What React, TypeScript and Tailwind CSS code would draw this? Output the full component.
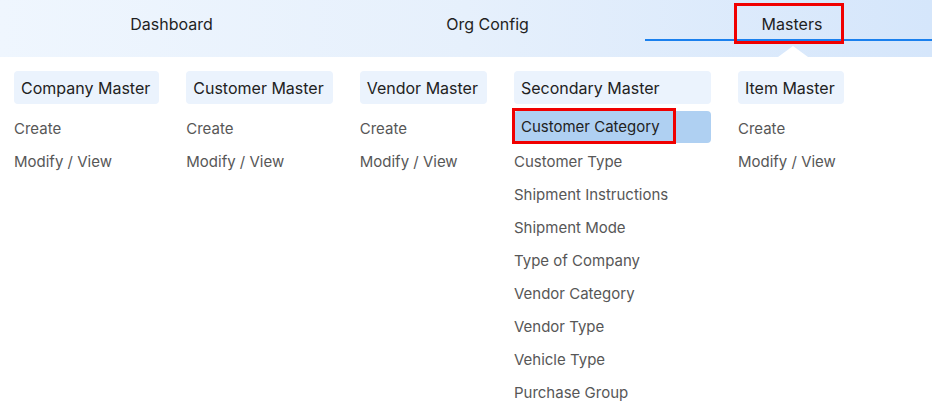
import React from 'react';

type MenuColumn = {
  title: string;
  items: string[];
  width?: string;
};

const columns: MenuColumn[] = [
  { title: 'Company Master', items: ['Create', 'Modify / View'] },
  { title: 'Customer Master', items: ['Create', 'Modify / View'] },
  { title: 'Vendor Master', items: ['Create', 'Modify / View'] },
  {
    title: 'Secondary Master',
    width: 'w-[197px]',
    items: [
      'Customer Category',
      'Customer Type',
      'Shipment Instructions',
      'Shipment Mode',
      'Type of Company',
      'Vendor Category',
      'Vendor Type',
      'Vehicle Type',
      'Purchase Group',
    ],
  },
  { title: 'Item Master', items: ['Create', 'Modify / View'] },
];

const ACTIVE_ITEM = 'Customer Category';

export default function App() {
  return (
    <div className="min-h-screen bg-white font-['Inter','Noto_Sans',sans-serif] text-[#1f1f1f]">
      {/* top tab bar */}
      <div className="relative h-[57px] bg-gradient-to-r from-[#eff6fe] via-[#e6f0fc] to-[#d5e6fb]">
        <div className="flex h-full">
          <div className="flex w-[343px] justify-center pt-[12px] text-[16px]">Dashboard</div>
          <div className="flex w-[289px] justify-center pt-[12px] text-[16px]">Org Config</div>
          <div className="ml-[13px] flex h-[41px] flex-1 justify-center border-b-2 border-[#1a80ee] pl-[7px] pt-[12px] text-[16px]">
            Masters
          </div>
        </div>
        {/* notch under active tab */}
        <div className="absolute bottom-0 left-[778px] h-0 w-0 border-x-[15px] border-b-[11px] border-x-transparent border-b-white" />
        {/* annotation box */}
        <div className="absolute left-[734px] top-[3px] h-[41px] w-[110px] border-[3px] border-[#f00000]" />
      </div>

      {/* mega menu */}
      <div className="flex gap-[27px] px-[14px] pt-[14px]">
        {columns.map((col) => (
          <div key={col.title} className={`flex flex-col ${col.width ?? ''}`}>
            <div className="mb-[7px] flex h-[33px] items-center self-stretch whitespace-nowrap rounded-[4px] bg-[#ebf3fd] pl-[7px] pr-[9px] text-[16px] text-[#222]">
              {col.title}
            </div>
            {col.items.map((item) =>
              item === ACTIVE_ITEM ? (
                <div key={item} className="relative flex h-[33px] items-start">
                  <div className="flex h-[32px] w-full items-center rounded-[4px] bg-[#afd0f2] px-[7px] pt-[1px] text-[15px] text-[#222]">
                    {item}
                  </div>
                  <div className="absolute -left-[2px] -top-[3px] h-[36px] w-[164px] border-[3px] border-[#f00000]" />
                </div>
              ) : (
                <div key={item} className="flex h-[33px] items-center whitespace-nowrap pt-[3px] text-[15px] text-[#575757]">
                  {item}
                </div>
              )
            )}
          </div>
        ))}
      </div>
    </div>
  );
}
